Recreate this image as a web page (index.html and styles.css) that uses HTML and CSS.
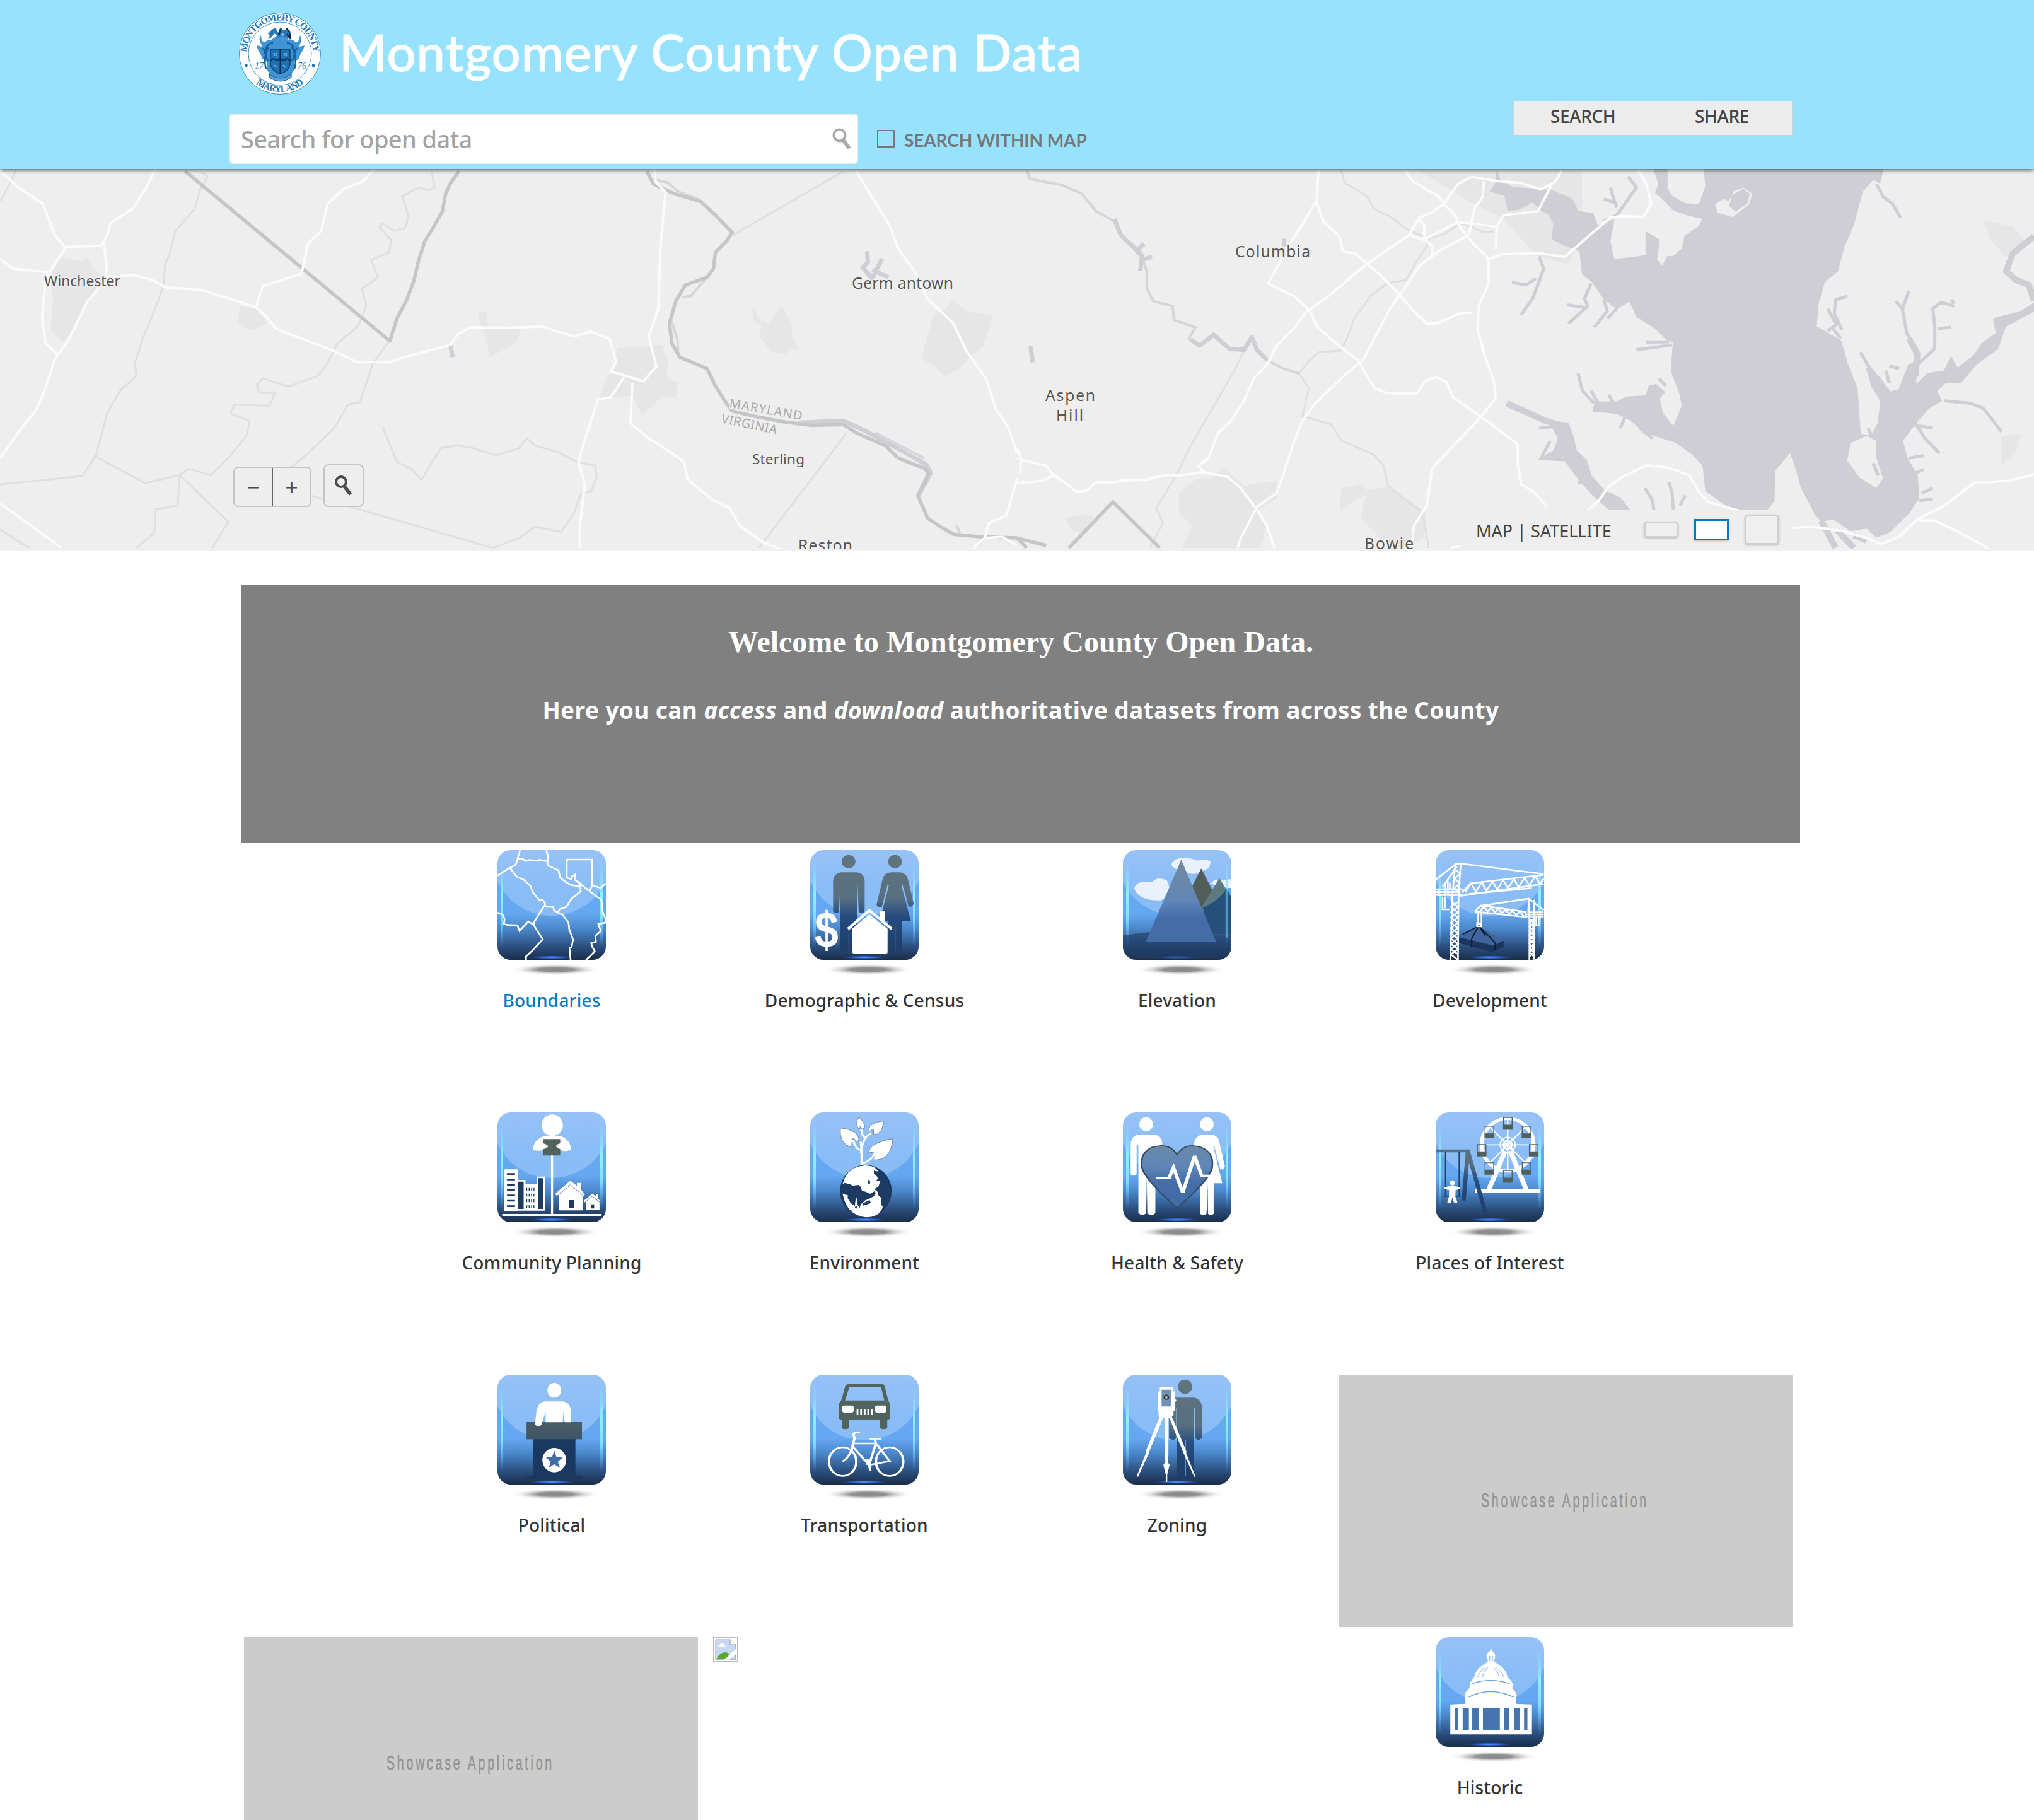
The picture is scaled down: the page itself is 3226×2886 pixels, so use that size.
FILE: index.html
```html
<!DOCTYPE html>
<html lang="en">
<head>
<meta charset="utf-8">
<title>Montgomery County Open Data</title>
<link rel="stylesheet" href="styles.css">
</head>
<body>
<svg class="defs" width="0" height="0" aria-hidden="true">
  <defs>
    <linearGradient id="sky" x1="0" y1="0" x2="0" y2="1">
      <stop offset="0" stop-color="#76aff3"/><stop offset=".35" stop-color="#66a8f3"/><stop offset=".58" stop-color="#65a8f1"/><stop offset=".72" stop-color="#4a86c9"/><stop offset=".88" stop-color="#2b4f7e"/><stop offset="1" stop-color="#1a2d49"/>
    </linearGradient>
    <linearGradient id="glow" x1="0" y1="0" x2="0" y2="1">
      <stop offset=".1" stop-color="#7fe6ff" stop-opacity="0"/><stop offset=".4" stop-color="#8ff2ff"/><stop offset=".62" stop-color="#7fe0ff"/><stop offset=".88" stop-color="#5ab0ff" stop-opacity="0"/>
    </linearGradient>
    <radialGradient id="drop"><stop offset="0" stop-color="#858585"/><stop offset=".4" stop-color="#949494"/><stop offset="1" stop-color="#fff" stop-opacity="0"/></radialGradient>
    <radialGradient id="spark"><stop offset="0" stop-color="#5a9dff"/><stop offset=".5" stop-color="#2f6be0" stop-opacity=".8"/><stop offset="1" stop-color="#1a3c80" stop-opacity="0"/></radialGradient>
    <linearGradient id="dark" gradientUnits="userSpaceOnUse" x1="0" y1="54" x2="0" y2="560">
      <stop offset="0" stop-color="#62757f"/><stop offset=".45" stop-color="#576f80"/><stop offset=".62" stop-color="#264c80"/><stop offset="1" stop-color="#1d3a63"/>
    </linearGradient>
    <linearGradient id="peak" gradientUnits="userSpaceOnUse" x1="0" y1="100" x2="0" y2="490">
      <stop offset="0" stop-color="#74889a"/><stop offset=".5" stop-color="#6087b8"/><stop offset=".72" stop-color="#446ca6"/><stop offset="1" stop-color="#446ca6"/>
    </linearGradient>
    <clipPath id="round"><rect width="172" height="174" rx="21"/></clipPath>
    <g id="tile">
      <rect width="172" height="174" fill="url(#sky)"/>
      <circle cx="86" cy="9" r="95" fill="#fff" opacity=".24"/>
      <rect x="5" width="4" height="174" fill="url(#glow)"/><rect x="163" width="4" height="174" fill="url(#glow)"/>
      <ellipse cx="86" cy="170" rx="38" ry="3" fill="url(#spark)"/>
    </g>
    <ellipse id="shade" cx="92" cy="189.500" rx="72" ry="9" fill="url(#drop)"/>
  </defs>
</svg>

<header class="header">
  <div class="brand">
    <svg class="seal" viewBox="0 0 130 130">
      <defs><path id="arcTop" d="M13.500 75A52.500 52.500 0 1 1 116.500 75"/><path id="arcBottom" d="M21 107A61 61 0 0 0 109 107"/></defs>
      <circle cx="65" cy="65" r="64.500" fill="#fff" stroke="#3b8cc4"/>
      <circle cx="65" cy="65" r="50" fill="#fff" stroke="#3b8cc4"/>
      <text class="seal-text"><textPath href="#arcTop" startOffset="12" textLength="161">MONTGOMERY COUNTY</textPath></text>
      <text class="seal-text"><textPath href="#arcBottom" startOffset="8" textLength="82">MARYLAND</textPath></text>
      <circle cx="11.500" cy="84" r="2.400" fill="#1f77bb"/><circle cx="118" cy="84" r="2.400" fill="#1f77bb"/>
      <text class="seal-year" x="25" y="89">17</text><text class="seal-year" x="93" y="89">76</text>
      <path d="M50 44c-8-4-6 8-14 0l-1-8c-6 8 2 13 1 18l-8-2c2 10 8 14 8 20l8 6 0 12 4 6c0 8 12 8 18 8s18 0 18-8l4-6 0-12 8-6c0-6 6-10 8-20l-8 2c0-5 6-10 1-18l-2 8c-7 8-6-4-14 0l-6-4c-6-8-14-6-19 0z" fill="#3f95d4"/>
      <path d="M47 54c-5 12-8 20-4 36M84 54c5 12 8 20 4 36M38 56c4 6 4 14 8 20M92 56c-4 6-4 14-8 20M54 48c-8 0-12 8-12 14M76 48c8 0 12 8 12 14" fill="none" stroke="#175f9e" stroke-width="2.500"/>
      <path d="M46 34l6-7 6-3 4 8 4-9 5 5 6-3 4 8-4 4 3 4-8-2-2-6-6 6-8-6-4 6-6 3 3-6z" fill="#2878b8"/>
      <path d="M75 25l5 5 2 12-6-8M66 26l-3 10" stroke="#0c2f55" stroke-width="2.500" fill="none"/>
      <path d="M50 58h31v22c0 10-8 14-15.500 17.500C58 94 50 90 50 80z" fill="#1c70b4" stroke="#0c3f70" stroke-width="1.500"/>
      <path d="M65.500 58v39M50 76l5-3 5 3 5-3 6 3 5-3 5 3" fill="none" stroke="#0a2f55" stroke-width="2"/>
      <path d="M55 64l5 5M60 64l-5 5M71 64l5 5M76 64l-5 5M56 83l4 4M70 83l4 4" stroke="#7fc0ea" stroke-width="1.500"/>
      <path d="M48 98q17 12 35 0v5q-17 12-35 0z" fill="#5aa6db" stroke="#1c5f99"/>
    </svg>
    <h1 class="title">Montgomery County Open Data</h1>
  </div>
  <div class="search-row">
    <div class="search-box"><span class="placeholder">Search for open data</span>
      <svg class="lens" viewBox="0 0 30 34"><circle cx="11.500" cy="11.500" r="9" fill="none" stroke="#aaa" stroke-width="4"/><path d="M17 19l10 13" stroke="#aaa" stroke-width="6"/></svg>
    </div>
    <span class="check"></span><span class="within">SEARCH WITHIN MAP</span>
  </div>
  <nav class="nav"><span class="nav-search">SEARCH</span><span class="nav-share">SHARE</span></nav>
</header>

<section class="map">
  <svg class="map-art" viewBox="0 0 3226 606">
    <g class="geo" transform="translate(0 -8) scale(1.0287 .3954)">
      <path class="urban" d="M92 370L125 392L135 375L142 410L158 450L150 500L128 590L105 690L98 715L78 665L82 540L78 420ZM370 570L398 585L412 640L388 668L366 645ZM738 585L750 600L752 650L803 660L797 715L755 775L748 680L740 640ZM952 740L1020 725L1030 790L1028 850L1045 880L1042 940L1022 930L990 1010L975 930L925 940L935 855L945 830ZM1160 570L1172 630L1185 640L1205 570L1220 640L1222 700L1234 748L1218 738L1212 762L1190 755L1170 690L1175 650L1162 630ZM1440 600L1458 585L1468 545L1490 590L1530 610L1524 670L1516 730L1500 765L1480 820L1458 852L1440 810L1420 780L1430 690Z"/>
      <g class="county">
        <path d="M310 30L320 50L310 95L300 180L270 270L262 360L255 400L252 490L238 590L220 700L208 800L210 850L185 910L165 1000L148 1170L127 1252L0 1285M145 1170L224 1280L277 1248L352 1435L327 1540M277 1248L274 1370L240 1385L238 1480L210 1540M600 710L575 800L555 955L537 965L515 1060L475 1160L450 1215M480 1330L760 1540M1300 30L1130 285M1305 1080L1170 1540M25 20L15 80L0 150M45 1540L0 1465"/>
        <path d="M665 25L670 95L660 105L645 95L620 130L630 210L625 255L608 268L590 238L585 255L603 305L600 355L572 385L583 455L558 500L565 570L552 650L520 720L505 800L490 850L445 893L405 860L396 885L400 915L424 920L415 970L362 965L355 1000L385 1030L380 1090L355 1170L325 1248L290 1222L277 1248M590 1055L612 1195L635 1225L650 1268L665 1200L680 1140L705 1128L730 1140L765 1168L800 1140L812 1100L825 1130L860 1155L890 1195L918 1210L920 1255L912 1310L895 1325L885 1400L865 1475L825 1455L800 1500L760 1540"/>
      </g>
      <path class="river wide" d="M1230 1038L1300 1030L1330 1065L1380 1135L1428 1205L1435 1240L1416 1330"/>
      <path class="river" d="M1007 60L1030 75L1045 110L1080 145M1090 455L1065 530L1052 535M1035 630L1044 700L1046 760M1350 1078L1380 1120L1425 1180M1475 1450L1480 1480"/>
      <path class="state" d="M285 28L601 710L612 620L627 545L638 470L645 390L655 310L668 255L682 190L687 120L695 75L708 28"/>
      <path class="state" d="M997 28L1007 80L1040 120L1080 150L1105 210L1129 275L1120 310L1103 355L1100 420L1090 455L1057 485L1042 550L1032 640L1036 720L1048 775L1090 820L1103 890L1115 940L1128 990L1160 1010L1210 1035L1250 1048L1300 1045L1320 1078L1365 1130L1385 1180L1425 1220L1432 1240L1415 1330L1430 1420L1450 1455L1470 1485L1510 1495L1568 1500L1613 1530"/>
      <path class="river wide" d="M1337 350L1338 395L1330 415L1345 460L1352 420L1360 380M1345 425L1370 455M694 725L698 775"/>
      <g class="road">
        <path d="M0 28l30 70 35 60 10 60 10 70 15 45 55-5 10-40 5-50 35-60 20-80 15-80M160 310l5 120-10 60-20 60-30 160-20 70-15 120-15 90-25 80-30 110M100 340l-20 80-10 50-5 150 5 100 18 40M0 380l20 40 60 15M165 455l40-10 30 20 20 30 55 10 50 40 35 30 20 50 10 35 30 30 60 60 35 45 50 0 30-25 65-45 10-40 20-30 60 2 50-5 50 40 25-20 30 30 10 90-8 40 50 40 20-60-12-120 15-110 3-240 8-230-15-40-3-80M395 570l10-80 60-50 10-120 20-50 10-110 25-60 30-30 20-60M962 855l-20 80-20 10-18 140-12 110 10 90-8 170 0 85M975 880L972 1040L1000 1100L1030 1150L1055 1195L1060 1265L1100 1350L1125 1380L1140 1450L1175 1515L1205 1545M1320 28L1372 250L1385 340L1410 430L1430 540L1470 640L1490 750L1520 860L1535 980L1555 1060L1568 1160M1568 1260L1552 1410L1525 1440L1518 1500L1500 1540M1520 1500L1545 1495L1568 1530M0 1360L95 1540"/>
      </g>
    </g>
    <g class="geo" transform="translate(1613 -8) scale(1.0287 .3954)">
      <path class="urban" d="M620 25L870 25L870 190L830 220L825 290L860 350L850 405L800 365L750 220L690 140ZM1490 225L1535 250L1555 310L1525 375L1500 300ZM1518 1090L1548 1085L1540 1160L1518 1205ZM250 1320L275 1265L305 1255L318 1215L335 1255L350 1290L402 1270L400 1340L370 1390L385 1450L375 1540L255 1540L270 1450L250 1400ZM500 1300L530 1285L545 1320L520 1350L498 1392ZM540 1310L575 1290L600 1340L630 1400L628 1500L590 1540L560 1500L530 1420ZM75 1420L100 1405L125 1420L100 1480L85 1475Z"/>
      <path d="M870 25v160" stroke="#ddd" fill="none"/>
      <g class="county">
        <path d="M500 25L505 75L540 130L550 180L575 210L600 260L635 300L632 330L615 395L600 465L570 480L545 530L520 620L512 680L500 748L465 755L450 790L435 840M350 750L335 830L270 1120L245 1250L215 1380L225 1440L205 1540M435 840L450 900L440 1010L485 1045L500 1110L550 1165L565 1210L572 1290L595 1340L625 1395L635 1540M635 300L660 280L685 235L720 275L735 270"/>
      </g>
      <path class="state" d="M80 1540L148 1355L220 1540M0 1500L15 1540"/>
      <path class="river" d="M15 25L20 60L70 85L100 120L122 190L150 230L162 290L190 350L200 430L200 500L210 550L240 570L242 625L275 655L265 700L282 728L303 680L325 740L350 748L362 690L368 740L385 785L410 820L435 840"/>
      <path class="river wide" d="M150 220L160 285L178 330L193 370L190 428M185 345L196 320M192 385L208 372M268 705L282 728L303 685L328 742L350 745L362 695L370 745L385 785M21 730L24 795M412 300L412 330"/>
      <path class="water" d="M1060 20L1062 90L1052 163L1030 160L1010 130L1002 100L1002 20L982 20L990 80L985 115L1000 150L1012 185L1035 205L1058 218L1052 250L1030 290L1026 340L1012 372L1003 372L995 412L986 385L990 305L970 275L970 368L920 385L914 310L920 225L905 240L895 250L888 200L865 190L855 140L825 108L790 100L765 95L745 70L740 30L738 80L730 108L752 125L757 185L775 180L795 150L808 185L820 200L828 240L825 300L840 320L868 350L872 440L888 475L905 540L925 580L945 548L955 610L985 660L1000 700L1012 715L1009 830L1022 920L1026 970L1012 1055L995 1000L990 940L998 915L985 885L975 890L970 930L940 935L925 955L892 955L888 990L925 1000L945 1025L965 1070L985 1090L1015 1115L1040 1160L1058 1210L1062 1310L1105 1390L1155 1390L1167 1350L1168 1230L1192 1155L1200 1210L1210 1300L1232 1410L1240 1430L1260 1425L1285 1470L1310 1460L1325 1495L1345 1475L1375 1400L1390 1340L1388 1250L1372 1180L1365 1110L1385 1040L1405 980L1425 950L1418 910L1432 875L1455 875L1480 800L1512 740L1524 650L1568 590L1568 560L1545 595L1506 620L1510 680L1488 720L1475 770L1450 820L1440 775L1430 830L1405 840L1385 888L1388 790L1375 805L1360 905L1347 915L1330 865L1310 820L1318 890L1332 950L1328 1040L1318 1090L1300 1085L1295 900L1280 800L1270 710L1232 652L1235 560L1245 470L1265 430L1275 330L1290 240L1303 110L1320 60L1330 75L1335 20Z"/>
      <path class="water" d="M820 1030L850 1040L858 1100L862 1150L878 1190L885 1250L905 1310L930 1340L945 1390L915 1390L885 1320L862 1250L845 1190L805 1185L828 1150L835 1100Z"/>
      <path class="land" d="M1120 95L1134 120L1128 165L1103 213L1080 195L1077 160L1090 140L1097 150L1105 110ZM1310 1090L1325 1110L1325 1180L1335 1260L1325 1300L1300 1260L1280 1190L1285 1120Z"/>
      <path d="M1120 100L1130 120L1126 160L1108 190L1098 170L1102 125Z" fill="#cfced4"/>
      <g class="creek">
        <path d="M942 50L955 95L940 150L925 205L905 230M915 95L920 140L925 175M905 140L920 155M1325 80L1335 130L1350 160L1362 215M805 370L812 420L805 470L795 540L777 605M800 460L785 485L763 475M885 480L875 540L880 570L850 640M848 565L875 575M905 545L910 590L890 655M925 580L910 620M1010 725L985 735L955 745M1005 714L970 714M865 840L872 910L890 960M895 955L885 910M920 960L912 925M990 860L1000 890M940 1000L930 1060M960 1060L980 1100M822 1110L808 1180M835 1050L805 1060M885 1240L860 1245M890 1290L865 1275M905 1320L895 1340M982 1390L980 1350L968 1300M1012 1390L1010 1320L1005 1275M1022 1370L1030 1330M1280 530L1262 545L1260 600L1272 665M1262 640L1250 580M1250 670L1265 640M1270 700L1258 660"/>
        <path d="M1375 510L1365 580L1372 680L1388 745L1390 800M1355 550L1368 590M1445 570L1425 555L1412 580L1415 650L1415 740L1390 800M1440 655L1420 660M1445 560L1440 545M1430 950L1470 960L1490 980L1505 1030L1518 1075M1385 1040L1400 1100L1422 1160M1390 1050L1412 1060M1375 1180L1398 1170M1385 1240L1398 1225M1390 1350L1412 1345M1395 1320L1412 1300M1300 755L1315 820L1335 880M1340 830L1345 880M1360 820L1345 810M1312 1060L1318 1090M1320 1200L1328 1250"/>
        <path class="thick" d="M1568 290L1535 360L1525 430L1540 465L1560 485L1568 550M755 960L785 995L815 1030L835 1045M1375 700L1388 760L1385 850M1240 1430L1250 1480L1262 1540M1265 1470L1290 1540M1290 1490L1310 1510"/>
      </g>
      <g class="road">
        <path d="M465 25l-3 120-20 90-20 80-35 165 40 50 25 60 10 60 30 70 35 70 10 50 15 60 20 20 45 0 12-50 18-15 15 20 10 60 55 100 45 90 0 80 5 80 20 30 20 60M462 150l10 80 25 60 5 60 20 10 40 90 30 80 20 60 20 50 15 0 35-40 20-5M840 25L830 70L808 102L775 75L740 68L700 52L680 80L660 155L640 195L620 215L605 285L540 400L480 530L445 595L430 650L400 730L387 800L365 860L350 950L330 1030L310 1080L295 1180L280 1210L288 1235L250 1250L230 1247L200 1265L160 1270L150 1278L122 1275L108 1310L92 1315L75 1280L55 1245L45 1210L0 1182M285 1235L325 1255L345 1300L368 1380L385 1450L397 1540M598 25L610 70L650 130L660 165L675 205L682 250L700 310L727 380L727 480L712 570L710 660L720 760L735 870L738 940L710 1030L680 1110L640 1220L632 1370L612 1450L608 1540M605 285L627 305L680 232L740 252M720 70L718 130L705 180L697 285L650 350L620 410L600 490L575 580L555 680L535 780L500 860L460 960L440 1030L425 1130L410 1250L400 1320L370 1375L345 1500L340 1540M727 380L748 362L803 358L845 372L890 270L915 215L935 208L965 213L978 160L970 80L958 25M738 340L740 250L750 205L803 190L825 80M620 225L628 245L628 300L640 330L640 370M880 1390L897 1350L910 1300L930 1260L970 1208L1005 1218L1037 1250L1050 1310L1065 1355L1113 1390M1195 1460L1225 1455L1270 1470L1310 1500L1332 1525L1360 1495L1388 1425L1430 1370L1475 1280L1530 1270L1568 1245M1390 1430L1415 1430L1455 1480L1498 1542M0 1140L6 1180L5 1240M0 1280L40 1270L55 1250M668 1540L685 1532"/>
      </g>
    </g>
    <g class="places">
      <text x="70" y="186" font-size="23" textLength="121">Winchester</text>
      <text x="1351" y="190" textLength="161">Germ antown</text>
      <text x="1193" y="468" font-size="22.500" textLength="83">Sterling</text>
      <text x="1266" y="606" textLength="86">Reston</text>
      <text x="1959" y="140" textLength="119">Columbia</text>
      <text x="1658" y="368" textLength="79">Aspen</text>
      <text x="1675" y="400" textLength="43">Hill</text>
      <text x="2164" y="603" textLength="78">Bowie</text>
      <text class="region" transform="translate(1156 378) rotate(10)" textLength="117">MARYLAND</text>
      <text class="region" transform="translate(1143 402) rotate(12)" textLength="90">VIRGINIA</text>
    </g>
    <rect y="602" width="3226" height="4" fill="#f1f1f1"/>
  </svg>
  <div class="zoom"><span>−</span><span>+</span></div>
  <div class="locate"><svg viewBox="0 0 30 34"><circle cx="11" cy="11" r="8" fill="none" stroke="#4c4c4c" stroke-width="4"/><path d="M16 18l10 13" stroke="#4c4c4c" stroke-width="5.500"/></svg></div>
  <div class="basemap"><span class="kinds">MAP | SATELLITE</span><i class="size small"></i><i class="size medium"></i><i class="size large"></i></div>
</section>

<main class="page">
  <section class="welcome">
    <h2>Welcome to Montgomery County Open Data.</h2>
    <p>Here you can <em>access</em> and <em>download</em> authoritative datasets from across the County</p>
  </section>

  <div class="row">
    <a class="topic active">
      <svg class="icon" viewBox="0 0 172 200"><use href="#shade"/><g clip-path="url(#round)"><use href="#tile"/>
        <g class="line" transform="scale(.4719 .3333) translate(-61 -54)"><path d="M137 54L128 99L122 125L103 138L61 175M130 96L147 97L155 106L168 101L195 105L200 100L229 107M225 54L231 85L229 125L250 140L266 150L272 185L290 205L305 218L338 228M338 210L341 250L310 285L292 325L270 335L265 350L252 342L248 325L222 323L220 305L213 290L203 294L180 255L172 225L150 195L125 180L103 138M294 185L294 99L379 99L379 225L370 248L320 195L322 170L312 178L308 192ZM320 195L340 212L330 232M379 222L408 234L426 212M371 250L390 270L410 290L413 320L415 350L426 385L422 400L400 405L408 440L390 462L392 490L376 497L380 515L388 535L375 555L358 577M219 318L200 360L183 400L185 415L213 478L180 530L157 560L157 577M255 345L280 362L300 400L302 430L315 480L310 515L303 520L307 577M61 352L80 362L85 385L82 405L95 410L128 412L135 438L165 393L185 412"/></g>
      </g></svg><span>Boundaries</span>
    </a>
    <a class="topic">
      <svg class="icon" viewBox="0 0 172 200"><use href="#shade"/><g clip-path="url(#round)"><use href="#tile"/>
        <g transform="scale(.4719 .3333) translate(-1112 -54)">
          <g fill="url(#dark)"><ellipse cx="1241" cy="109" rx="23" ry="32"/><path d="M1214 160h55q26 6 26 40v145q-6 14-20 4l-4-142v324q-14 16-27 4l-2-185-2 185q-14 12-27-4V207l-4 142q-12 10-20-4V200q2-34 25-40z"/><ellipse cx="1397" cy="109" rx="23" ry="32"/><path d="M1383 160h32q20 5 25 30l20 120q-6 18-17 12l-22-110-2 12 31 166h-29v145q-12 12-21 0l-2-145-2 145q-12 12-21 0V390h-29l30-166-3-12-20 112q-12 6-18-10l20-120q5-32 28-34z"/></g>
          <path fill="#fff" d="M1236 424l75-92 36 44v-31h17v50l25 29-5 11-73-86-69 86zM1254 427l57-68 61 70v112q0 5-4 5h-110q-4 0-4-5z"/>
        </g><text transform="translate(26 154) scale(.85 1)" class="dollar">$</text>
      </g></svg><span>Demographic &amp; Census</span>
    </a>
    <a class="topic">
      <svg class="icon" viewBox="0 0 172 200"><use href="#shade"/><g clip-path="url(#round)"><use href="#tile"/>
        <g transform="scale(.4719 .3333) translate(-66 -54)">
          <g fill="#e9f2fc"><path d="M227 122q14-34 45-32 25 2 45 14 30-14 44 6-2 36-25 40-30 30-62 8-34-8-47-36zM104 238q6-42 60-32 18-30 50-8l15 60-35 35q-74 4-90-55zM362 212q10-20 30-15l40-5v42h-40z"/></g>
          <path d="M66 460l90-16 274 8v120H66z" fill="#1e3a63" opacity=".6"/>
          <path d="M296 235l33-94 40 110 25 150h-60z" fill="#515d58"/><path d="M390 188l-60 138 25 130h75V275z" fill="#5c7a80"/><path d="M335 326q45-20 80-88l15 42v175h-75z" fill="#26507c"/>
          <rect x="411" y="190" width="9" height="280" fill="#6fd4ff" opacity=".55"/>
          <path d="M262 100L143 490h236z" fill="url(#peak)"/>
        </g>
      </g></svg><span>Elevation</span>
    </a>
    <a class="topic">
      <svg class="icon" viewBox="0 0 172 200"><use href="#shade"/><g clip-path="url(#round)"><use href="#tile"/>
        <g transform="scale(.4719 .3333) translate(-1117 -54)">
          <path d="M1187 463l75-45 84 66-30 24z" fill="#41669e"/><path d="M1187 465l123 44 36-24-1 32-40 22-118-46z" fill="#1c355c"/>
          <path class="cable" d="M1262 415L1208 455M1262 415L1238 475V517M1262 415L1317 495V530M1262 415L1284 461"/>
          <g class="line crane"><path d="M1166 577L1173 275L1183 120H1201L1194 275L1192 577M1185 120L1117 195M1188 132L1140 230M1200 118L1480 168M1205 255L1235 212L1480 172M1200 272L1480 215M1228 263L1440 235M1117 240H1207M1117 268H1207M1117 254H1200M1125 240V268M1140 275V336H1165M1148 275V330M1158 200V260M1150 215V260M1165 210V240"/>
          <path d="M1171 300L1192 325L1168 350L1192 375L1168 400L1192 425L1168 450L1192 475L1168 500L1192 525L1168 550L1192 577M1192 300L1168 325L1192 350L1168 375L1192 400L1168 425L1192 450L1168 475L1192 500L1168 525L1192 550M1185 150L1200 165L1180 190L1198 210L1178 240L1198 255M1216 255L1236 212L1252 252L1272 207L1288 247L1308 202L1324 242L1344 197L1360 236L1380 191L1396 230L1416 185L1432 223L1452 178L1468 216L1480 190"/>
          <path d="M1250 345L1268 318L1420 348V372L1250 347M1265 320L1430 285L1480 340M1430 288L1428 350H1480M1415 370H1480M1415 360H1480M1432 285V577M1447 290V577M1268 340L1280 325L1292 346L1304 328L1316 350L1328 332L1340 356L1352 336L1364 360L1376 342L1388 364L1400 346L1412 368M1432 380L1447 400L1432 420L1447 440L1432 460L1447 480L1432 500L1447 520L1432 540L1447 560M1447 380L1432 400L1447 420L1432 440L1447 460L1432 480L1447 500L1432 520L1447 540L1432 560M1455 370V412H1463V370M1260 350V405M1271 350V405M1256 405H1269V417H1256Z"/></g>
        </g>
      </g></svg><span>Development</span>
    </a>
  </div>

  <div class="row">
    <a class="topic">
      <svg class="icon" viewBox="0 0 172 200"><use href="#shade"/><g clip-path="url(#round)"><use href="#tile"/>
        <g transform="scale(.4719 .3333) translate(-61 -41)">
          <g fill="#fff"><ellipse cx="245" cy="102" rx="36" ry="51"/><path d="M220 152h50q36 15 38 65-20 14-38 2h-52q-20 10-38-2 4-50 40-65zM241 245h7v280h-7zM77 524h334v9H77zM83 312h47v198H83zM130 362h25v20h38v-36h28v162h-91zM255 427l51-61 22 24v-14h13v30l14 26-5 8-45-51-44 51zM268 430l38-44 41 45v76h-79zM351 461l29-34 12 14v-10h7v20l9 12-5 6-22-26-26 26zM359 462l21-24 24 24v44h-45z"/></g>
          <path fill="none" stroke="#2c5a95" stroke-width="2" d="M262 438L306 386L350 438M355 468L380 440L405 468"/>
          <path fill="#52625f" d="M215 168h57v20q-28 12 0 28v30h-57v-30q32-14 0-28z"/>
          <path fill="#1d3a63" d="M93 330h27v8H93zM93 356h27v8H93zM93 381h27v8H93zM93 407h27v8H93zM93 432h27v8H93zM93 457h27v8H93zM93 483h27v8H93zM131 370h18v130h-18zM197 354h18v146h-18zM301 458h17v38h-17zM376 478h10v20h-10z"/>
          <path stroke="#1d3a63" stroke-width="13" stroke-dasharray="3 5" d="M158 407h30M158 434h30M158 461h30M158 489h30"/>
        </g>
      </g></svg><span>Community Planning</span>
    </a>
    <a class="topic">
      <svg class="icon" viewBox="0 0 172 200"><use href="#shade"/><g clip-path="url(#round)"><use href="#tile"/>
        <g transform="scale(.4719 .3333) translate(-1112 -41)">
          <g class="leaf"><path d="M1214 115q60 10 62 58l-8 5q-8-14-12-14-6 20-4 42-44-14-38-91zM1276 63q24 36 18 50l-7 10-6-16-5 14q-16-26 0-58zM1359 81q-50 10-50 42l3 8 12-12 2 28q28 0 33-66zM1390 166q-80 20-82 68l22-6q4 10-8 38 60 10 68-100z"/></g>
          <path d="M1284 290q2-60-2-110M1283 122q6 40 14 40l20-24M1300 155q-16 40-18 80M1256 170q8 45 24 50M1285 285q36-16 46-56" fill="none" stroke="#fff" stroke-width="7"/>
          <ellipse cx="1299" cy="415" rx="87" ry="124" fill="#1d3a63"/>
          <path fill="#fff" d="M1296 293q36 0 44 30l-10 4 10 30-8 10 16-5-6 30-14 14 10 12 4 20 10 10-2 30 6 12q-10 48-57 50-72-10-80-135 5-102 77-112z"/>
          <path fill="#1d3a63" d="M1218 384l10-8 20 8 6 6 20-4 8 10 4 18 12 4 16 10 14-12 4 10-6 14-14 10-16 10-14 18-4 18-8-20-2-30-20-10-20-4-12-10zM1238 420l10-2 8 16 10 6-4 46-14-14-10-22zM1306 360l8 10-2 14-6-6zM1326 318l14 4 14 40-12 4-4-20-12-14zM1290 472l22-14 4 14-26 12zM1262 490l8-4-4 18z"/>
        </g>
      </g></svg><span>Environment</span>
    </a>
    <a class="topic">
      <svg class="icon" viewBox="0 0 172 200"><use href="#shade"/><g clip-path="url(#round)"><use href="#tile"/>
        <g transform="scale(.4719 .3333) translate(-66 -41)">
          <g fill="#fff"><ellipse cx="144" cy="97" rx="23" ry="33"/><path d="M118 147h55q25 6 25 45v140l-23 5v183q-12 16-27 2l-2-185-2 185q-14 12-26-2V195l-6 0v140q-12 14-20 0V192q2-40 26-45z"/><ellipse cx="348" cy="97" rx="23" ry="33"/><path d="M332 147h34q18 5 23 28l20 125q-6 18-16 10l-20-110-3 4 30 174h-29v145q-10 12-19 0l-1-145-4 145q-12 12-21 0V360l-22-160q2-45 28-53z"/></g>
          <path d="M248 242q26-60 80-35 46 25 38 98-10 60-118 190-106-130-118-190-8-73 34-98 58-25 84 35z" fill="url(#peak)" stroke="#334b5c" stroke-width="5"/>
          <path d="M177 353h44l15-50 31 120 40-175 24 95h38" fill="none" stroke="#fff" stroke-width="12"/>
        </g>
      </g></svg><span>Health &amp; Safety</span>
    </a>
    <a class="topic">
      <svg class="icon" viewBox="0 0 172 200"><use href="#shade"/><g clip-path="url(#round)"><use href="#tile"/>
        <g transform="scale(.4719 .3333) translate(-1117 -41)">
          <g class="wheel"><ellipse cx="1359" cy="195" rx="87" ry="125" stroke-width="14"/><ellipse cx="1359" cy="195" rx="25" ry="36"/><ellipse cx="1359" cy="195" rx="13" ry="19" stroke-width="9"/><path d="M1272 195h174M1359 70v250M1298 107l122 176M1420 107l-122 176"/><path stroke-width="17" d="M1350 225l-55 185M1368 225l54 185M1250 415h217"/></g>
          <g class="cabs"><path d="M1345 66h29v55h-29zM1283 107h29v55h-29zM1408 107h29v55h-29zM1257 193h29v55h-29zM1432 193h29v55h-29zM1283 280h29v55h-29zM1408 280h29v55h-29zM1345 318h29v55h-29z"/><path d="M1345 101h29v20h-29zM1283 142h29v20h-29zM1408 142h29v20h-29zM1257 228h29v20h-29zM1432 228h29v20h-29zM1283 315h29v20h-29zM1408 315h29v20h-29zM1345 353h29v20h-29z"/></g>
          <path d="M1117 224h108l60 298M1225 230l-14 230" fill="none" stroke="url(#dark)" stroke-width="14"/>
          <path d="M1150 230v210M1196 230v210M1144 440h58" fill="none" stroke="#1f416b" stroke-width="4"/>
          <g fill="#fff"><ellipse cx="1173" cy="376" rx="8" ry="12"/><path d="M1147 397L1165 391H1181L1198 397V406L1184 410L1183 440L1190 468Q1184 476 1178 468L1173 445L1169 468Q1162 476 1156 468L1162 440V410L1147 406Z"/></g>
        </g>
      </g></svg><span>Places of Interest</span>
    </a>
  </div>

  <div class="row">
    <a class="topic">
      <svg class="icon" viewBox="0 0 172 200"><use href="#shade"/><g clip-path="url(#round)"><use href="#tile"/>
        <g transform="scale(.4719 .3333) translate(-61 -41)">
          <path fill="#1b3861" d="M181 345h142v178h22v14H159v-14h22z"/><path fill="url(#dark)" d="M159 266h186v82H159z"/><path fill="#43565e" d="M159 266h186v82H159z" opacity=".75"/>
          <g fill="#fff"><ellipse cx="252" cy="115" rx="23" ry="35"/><path d="M220 168h62q25 8 25 45v54h-20l-4-53-3 53h-57v-53l-14 65q-12 20-22-4l5-60q5-42 28-47z"/><ellipse cx="252" cy="447" rx="40" ry="58"/></g>
          <path fill="#416da8" d="M252 402L259 431L282 432L264 455L271 484L252 466L233 484L240 455L222 432L245 431Z"/>
        </g>
      </g></svg><span>Political</span>
    </a>
    <a class="topic">
      <svg class="icon" viewBox="0 0 172 200"><use href="#shade"/><g clip-path="url(#round)"><use href="#tile"/>
        <g transform="scale(.4719 .3333) translate(-1112 -41)">
          <path fill="#50635f" fill-rule="evenodd" d="M1238 84H1356L1362 94L1374 162L1380 178V250L1371 257V295Q1358 304 1347 295V257H1243V295Q1230 304 1218 295V257L1209 250V178L1217 160L1230 94ZM1244 98L1229 163H1361L1350 98Z"/>
          <g fill="#fff"><rect x="1220" y="187" width="38" height="34" rx="8"/><rect x="1330" y="187" width="38" height="34" rx="8"/><path d="M1268 205h6v26h-6zM1280 205h6v26h-6zM1292 205h6v26h-6zM1304 205h6v26h-6zM1316 205h6v26h-6z"/></g>
          <g class="bike"><ellipse cx="1221" cy="454" rx="46" ry="68"/><ellipse cx="1379" cy="454" rx="46" ry="68"/><path d="M1221 454q30-30 34-80l6-30M1280 316h-18l-5 10 6 20M1253 380l57 90 69-18-46-85-23 103M1255 368h78l-4-20M1312 345l40 0M1310 468l4 30M1305 440v30"/></g>
        </g>
      </g></svg><span>Transportation</span>
    </a>
    <a class="topic">
      <svg class="icon" viewBox="0 0 172 200"><use href="#shade"/><g clip-path="url(#round)"><use href="#tile"/>
        <g transform="scale(.4719 .3333) translate(-66 -41)">
          <g fill="url(#dark)"><ellipse cx="275" cy="98" rx="24" ry="34"/><path d="M240 150h65q26 8 26 45v145q-8 18-21 5l-3-148-2 0v338h-28l-1-185-2 185h-27V340q-10 18-26 4V170z"/></g>
          <path d="M305 198v140M245 200v140M277 350v170" stroke="#8fbdf0" stroke-width="1.500"/>
          <path fill="#fff" d="M190 100H236V120L242 122V157L246 161L242 169V213H236V238H230L279 405V415L309 522L306 528L270 415L267 405L222 245H219V425L216 455L223 470L215 515V550H210V515L202 470L209 455L206 425V245H202L156 400L154 412L117 526L112 524L144 412V400L190 238H186V213L183 210V122L190 120Z"/>
          <path fill="#7190b4" d="M196 112h33v80h-33z"/><ellipse cx="212" cy="148" rx="7" ry="10" fill="#91a9c0" stroke="#333126" stroke-width="5"/>
        </g>
      </g></svg><span>Zoning</span>
    </a>
    <div class="showcase last"><svg viewBox="0 0 720 400"><text x="226" y="210" textLength="266" lengthAdjust="spacingAndGlyphs">Showcase Application</text></svg></div>
  </div>

  <div class="row final">
    <div class="showcase"><svg viewBox="0 0 720 400"><text x="226" y="210" textLength="266" lengthAdjust="spacingAndGlyphs">Showcase Application</text></svg></div>
    <svg class="missing" viewBox="0 0 40 40"><path d="M1 1h38v38H1z" fill="#fff" stroke="#bbb" stroke-width="2"/><path d="M4 4h23l9 8v24H4z" fill="#c7d8f4" stroke="#999"/><path d="M27 4v8h9" fill="#fff" stroke="#999"/><path d="M8 16q1-5 6-6 5 1 5 6z" fill="#fff"/><path d="M5 35q6-11 14-11t11 11z" fill="#56aa33"/><path d="M17 36L36 19v8L26 36z" fill="#fff"/></svg>
    <a class="topic">
      <svg class="icon" viewBox="0 0 172 200"><use href="#shade"/><g clip-path="url(#round)"><use href="#tile"/>
        <g transform="scale(.8929 .3333) translate(-1318 -78)">
          <path fill="#fff" d="M1416 128L1418 146L1421 150L1424 165L1422 192L1428 207Q1443 225 1446 270L1452 285L1455 300L1454 322L1460 340L1462 355L1460 395L1489 398V541H1344V398L1371 395L1370 345L1378 320L1379 295L1386 270Q1390 225 1405 207L1411 192L1408 165L1411 150L1414 146Z"/>
          <path fill="none" stroke="#609fe6" stroke-width="3.500" d="M1384 299q31-30 65 0M1377 363q38-52 79 0"/><path fill="none" stroke="#87b6ee" stroke-width="1.200" d="M1393 268q2-25 14-45M1401 268q2-25 10-45M1439 268q-2-25-14-45M1431 268q-2-25-10-45M1414 168v25M1419 168v25"/>
          <path fill="#4574ae" d="M1352 417h6v104h-6zM1366 417h11v104h-11zM1383 417h12v104h-12zM1402 417h30v104h-30zM1439 417h10v104h-10zM1457 417h11v104h-11zM1475 417h6v104h-6z"/>
        </g>
      </g></svg><span>Historic</span>
    </a>
  </div>
</main>
</body>
</html>
```

FILE: styles.css
```css
* { box-sizing: border-box; }
body { margin: 0; width: 3226px; height: 2886px; overflow: hidden; background: #fff; color: #333; font-family: "Noto Sans", "Open Sans", sans-serif; }
h1, h2, p { margin: 0; }
.defs { position: absolute; }

/* Header */
.header { position: relative; z-index: 2; height: 268px; padding: 20px 0 0 363px; background: #96e2ff; box-shadow: 0 1px 7px rgba(0, 0, 0, .75); }
.brand { display: flex; height: 160px; padding-left: 16px; align-items: flex-start; }
.seal { width: 130px; height: 130px; overflow: visible; }
.seal-text { font: bold 15px "Liberation Serif", serif; fill: #1f77bb; }
.seal-year { font: italic 14px "Liberation Serif", serif; fill: #1f77bb; }
.title { margin-left: 29px; font: 500 81px/124px Lato, sans-serif; letter-spacing: 1.1px; color: #fff; -webkit-text-stroke: 1px #fff; white-space: nowrap; }
.search-row { display: flex; align-items: center; height: 80px; }
.search-box { display: flex; align-items: center; justify-content: space-between; width: 998px; height: 80px; padding: 0 9px 0 17px; background: #fff; border: 2px solid #ececec; border-radius: 6px; }
.placeholder { font-size: 38px; font-weight: 500; letter-spacing: -.6px; color: #a3a3a3; white-space: nowrap; }
.lens { width: 30px; height: 34px; }
.check { width: 28px; height: 28px; margin-left: 30px; border: 2px solid #777; }
.within { margin: 3px 0 0 15px; font: bold 28px/40px Lato, sans-serif; letter-spacing: -.1px; color: #777; white-space: nowrap; }
.nav { position: absolute; left: 2400px; top: 160px; display: flex; width: 443px; height: 56px; padding-left: 58px; background: #ececec; border: solid #d0d0d0; border-width: 0 1px 2px; color: #444; font-size: 28px; font-weight: 500; letter-spacing: -.4px; line-height: 48px; }
.nav-search { width: 229px; }

/* Map */
.map { position: relative; height: 606px; background: #eee; overflow: hidden; }
.map-art { display: block; width: 3226px; height: 606px; }
.geo path { vector-effect: non-scaling-stroke; stroke-linejoin: round; }
.urban { fill: #e6e6e6; }
.county path { fill: none; stroke: #dfdfe1; stroke-width: 3; }
.state { fill: none; stroke: #c6c6c8; stroke-width: 5.5; }
.river { fill: none; stroke: #d6d6da; stroke-width: 4; }
.river.wide { stroke: #cfced4; stroke-width: 7; }
.water { fill: #cfced4; stroke: #cfced4; stroke-width: 2; }
.land { fill: #eee; }
.creek path { fill: none; stroke: #cfced4; stroke-width: 5; }
.creek .thick { stroke-width: 10; }
.road path { fill: none; stroke: #fbfbfb; stroke-width: 4; }
.places { font: 24.5px "Noto Sans", sans-serif; fill: #555; paint-order: stroke; stroke: #eee; stroke-width: 3px; }
.region { font-size: 20px; fill: #aaa; }
.zoom, .locate { position: absolute; display: flex; border: 2px solid #c5c5c5; border-radius: 8px; background: #eee; }
.zoom { left: 370px; top: 472px; width: 124px; height: 64px; color: #4c4c4c; }
.zoom span { flex: 1; text-align: center; font: 36px/62px "Noto Sans", sans-serif; }
.zoom span + span { border-left: 2px solid #666; }
.locate { left: 513px; top: 468px; width: 64px; height: 68px; align-items: center; justify-content: center; }
.locate svg { width: 30px; height: 34px; }
.basemap { position: absolute; left: 2323px; top: 541px; display: flex; align-items: center; width: 519px; height: 61px; padding-left: 18px; background: #eee; }
.kinds { width: 266px; padding-top: 3px; font-size: 27px; color: #444; white-space: nowrap; }
.size { width: 55px; margin-right: 25px; border: 3px solid #d0d0d0; border-radius: 5px; background: #efefef; box-shadow: 0 1px 3px #bbb; }
.small { height: 26px; }
.medium { height: 34px; border-color: #007ac2; border-radius: 0; background: #fff; }
.large { height: 48px; margin-right: 0; }

/* Page */
.page { padding: 54px 0 0 387px; }
.welcome { width: 2472px; height: 408px; margin: 0 0 12px -4px; padding-top: 62px; background: #808080; color: #fff; text-align: center; }
.welcome h2 { font: bold 48px/56px "Liberation Serif", serif; }
.welcome p { margin-top: 50px; font-weight: bold; font-size: 37px; letter-spacing: .38px; line-height: 60px; white-space: nowrap; }
.row { display: flex; align-items: flex-start; height: 416px; padding-left: 240px; }
.topic { display: flex; flex-direction: column; align-items: center; width: 496px; font-size: 28px; font-weight: 500; letter-spacing: .2px; line-height: 40px; white-space: nowrap; }
.topic span { margin-top: 18px; }
.active { color: #0079c1; }
.icon { width: 172px; height: 200px; }
.line path { fill: none; stroke: #fff; stroke-width: 2.6; vector-effect: non-scaling-stroke; }
.cable { fill: none; stroke: #0d1e36; stroke-width: 2; vector-effect: non-scaling-stroke; }
.dollar { font: bold 80px "Liberation Sans", sans-serif; text-anchor: middle; letter-spacing: 0; fill: #fff; }
.leaf path { fill: #fff; stroke: #71829a; stroke-width: 1; vector-effect: non-scaling-stroke; }
.wheel { fill: none; stroke: #fff; stroke-width: 5; }
.cabs path { stroke: #51605f; stroke-width: 3; fill: none; }
.cabs path + path { fill: #51605f; }
.bike { fill: none; stroke: #fff; stroke-width: 8; }
.showcase { width: 720px; height: 400px; background: #ccc; }
.showcase.last { margin-left: 8px; }
.showcase svg { display: block; }
.showcase text { font: 31px "Liberation Sans Narrow", "Liberation Sans", sans-serif; letter-spacing: 6px; fill: #949494; stroke: #949494; stroke-width: .6px; }
.final { padding-left: 0; height: 290px; overflow: hidden; }
.missing { width: 40px; height: 40px; margin: 0 944px 0 24px; }
```
